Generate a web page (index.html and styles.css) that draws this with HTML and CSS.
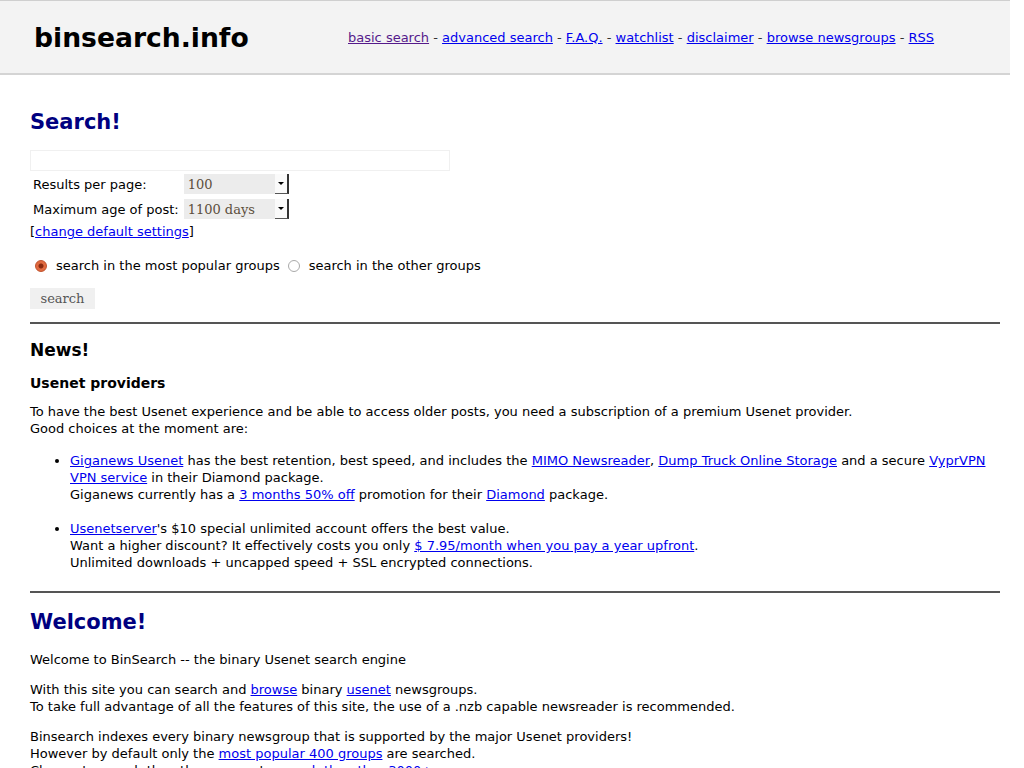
FILE: index.html
```html
<!DOCTYPE html>
<html lang="en">
<head>
    <meta charset="UTF-8">
    <title>binsearch.info - Usenet search engine</title>
    <link rel="stylesheet" href="styles.css">
</head>
<body>

<div class="header">
    <div class="logo">binsearch.info</div>
    <div class="menu">
        <a href="#" class="visited">basic search</a> -
        <a href="#">advanced search</a> -
        <a href="#">F.A.Q.</a> -
        <a href="#">watchlist</a> -
        <a href="#">disclaimer</a> -
        <a href="#">browse newsgroups</a> -
        <a href="#">RSS</a>
    </div>
</div>

<div class="content">
    <h1>Search!</h1>

    <form class="search-form">
        <input type="text" class="query" name="q">
        <table class="options">
            <tr>
                <td class="label">Results per page:</td>
                <td>
                    <div class="select">
                        <span class="value">100</span>
                        <span class="arrow"></span>
                    </div>
                </td>
            </tr>
            <tr>
                <td class="label">Maximum age of post:</td>
                <td>
                    <div class="select">
                        <span class="value">1100 days</span>
                        <span class="arrow"></span>
                    </div>
                </td>
            </tr>
        </table>
        <div class="settings">[<a href="#">change default settings</a>]</div>

        <div class="groups">
            <label><span class="radio checked"></span> search in the most popular groups</label>
            <label><span class="radio"></span> search in the other groups</label>
        </div>

        <button type="submit" class="btn">search</button>
    </form>

    <hr>

    <h2>News!</h2>
    <h3>Usenet providers</h3>
    <p>To have the best Usenet experience and be able to access older posts, you need a subscription of a premium Usenet provider.<br>
    Good choices at the moment are:</p>
    <ul>
        <li><a href="#">Giganews Usenet</a> has the best retention, best speed, and includes the <a href="#">MIMO Newsreader</a>, <a href="#">Dump Truck Online Storage</a> and a secure <a href="#">VyprVPN VPN service</a> in their Diamond package.<br>
        Giganews currently has a <a href="#">3 months 50% off</a> promotion for their <a href="#">Diamond</a> package.</li>
        <li><a href="#">Usenetserver</a>'s $10 special unlimited account offers the best value.<br>
        Want a higher discount? It effectively costs you only <a href="#">$ 7.95/month when you pay a year upfront</a>.<br>
        Unlimited downloads + uncapped speed + SSL encrypted connections.</li>
    </ul>

    <hr>

    <h1>Welcome!</h1>
    <p>Welcome to BinSearch -- the binary Usenet search engine</p>
    <p>With this site you can search and <a href="#">browse</a> binary <a href="#">usenet</a> newsgroups.<br>
    To take full advantage of all the features of this site, the use of a .nzb capable newsreader is recommended.</p>
    <p>Binsearch indexes every binary newsgroup that is supported by the major Usenet providers!<br>
    However by default only the <a href="#">most popular 400 groups</a> are searched.<br>
    Choose to search the other groups to <a href="#">search the other 3000+ groups</a>.</p>
</div>

</body>
</html>
```

FILE: styles.css
```css
body {
    margin: 0;
    font-family: 'DejaVu Sans', Verdana, sans-serif;
    font-size: 13px;
    line-height: 17px;
    color: #000;
    background: #fff;
}

a {
    color: #0000ee;
}

a.visited {
    color: #551a8b;
}

.header {
    width: 1010px;
    height: 75px;
    box-sizing: border-box;
    background: #f3f3f3;
    border-top: 1px solid #cfcfcf;
    border-bottom: 2px solid #d4d4d4;
    display: flex;
    align-items: center;
}

.logo {
    font-size: 26.6px;
    font-weight: bold;
    margin-left: 34px;
    width: 314px;
}

.menu {
    font-size: 13px;
    color: #333;
}

.content {
    width: 970px;
    padding: 18px 10px 0 30px;
}

h1 {
    color: #000080;
    font-size: 21px;
    margin: 17px 0;
    line-height: 24px;
}

h2 {
    font-size: 17px;
    margin: 16px 0 15px;
    line-height: 20px;
}

h3 {
    font-size: 14px;
    margin: 0 0 11px;
}

p {
    margin: 0 0 13px;
}

ul {
    margin: 15px 0 0;
    padding: 0 0 3px 40px;
}

li {
    margin-bottom: 17px;
}

hr {
    border: 0;
    border-top: 2px solid #555;
    margin: 0;
}

.query {
    display: block;
    width: 420px;
    height: 21px;
    box-sizing: border-box;
    margin: -1px 0 0;
    border: 1px solid #f0f0f0;
    background: #fff;
}

.options {
    border-spacing: 2px 5px;
    margin: -2px 0 -1px 1px;
}

.options td {
    padding: 0;
    font-size: 13px;
}

.options .label {
    padding-right: 3px;
}

.select {
    display: flex;
    align-items: center;
    width: 105px;
    height: 20px;
    background: #ececec;
}

.select .value {
    flex: 1;
    padding-left: 4px;
    font-family: 'DejaVu Serif', serif;
    font-size: 13px;
    color: #5c4f3d;
}

.select .arrow {
    width: 12px;
    height: 19px;
    background: #fafafa;
    border-right: 2px solid #333;
    border-bottom: 1px solid #555;
    position: relative;
}

.select .arrow::after {
    content: "";
    position: absolute;
    left: 3px;
    top: 8px;
    border-left: 3px solid transparent;
    border-right: 3px solid transparent;
    border-top: 3px solid #000;
}

.groups {
    display: flex;
    gap: 8px;
    margin: 17px 0 14px 5px;
    font-size: 13px;
}

.groups label {
    display: flex;
    align-items: center;
    gap: 9px;
}

.radio {
    display: inline-block;
    width: 12px;
    height: 12px;
    box-sizing: border-box;
    border: 1px solid #aaa;
    border-radius: 50%;
    background: #fff;
}

.radio.checked {
    border: 1px solid #c0502a;
    background: radial-gradient(circle, #8a2a10 0 2px, #e06a40 3px);
}

.btn {
    font-family: 'DejaVu Serif', serif;
    font-size: 13px;
    color: #555;
    background: #f0f0f0;
    border: 0;
    width: 65px;
    height: 21px;
    padding: 0;
    margin-bottom: 13px;
}
```
